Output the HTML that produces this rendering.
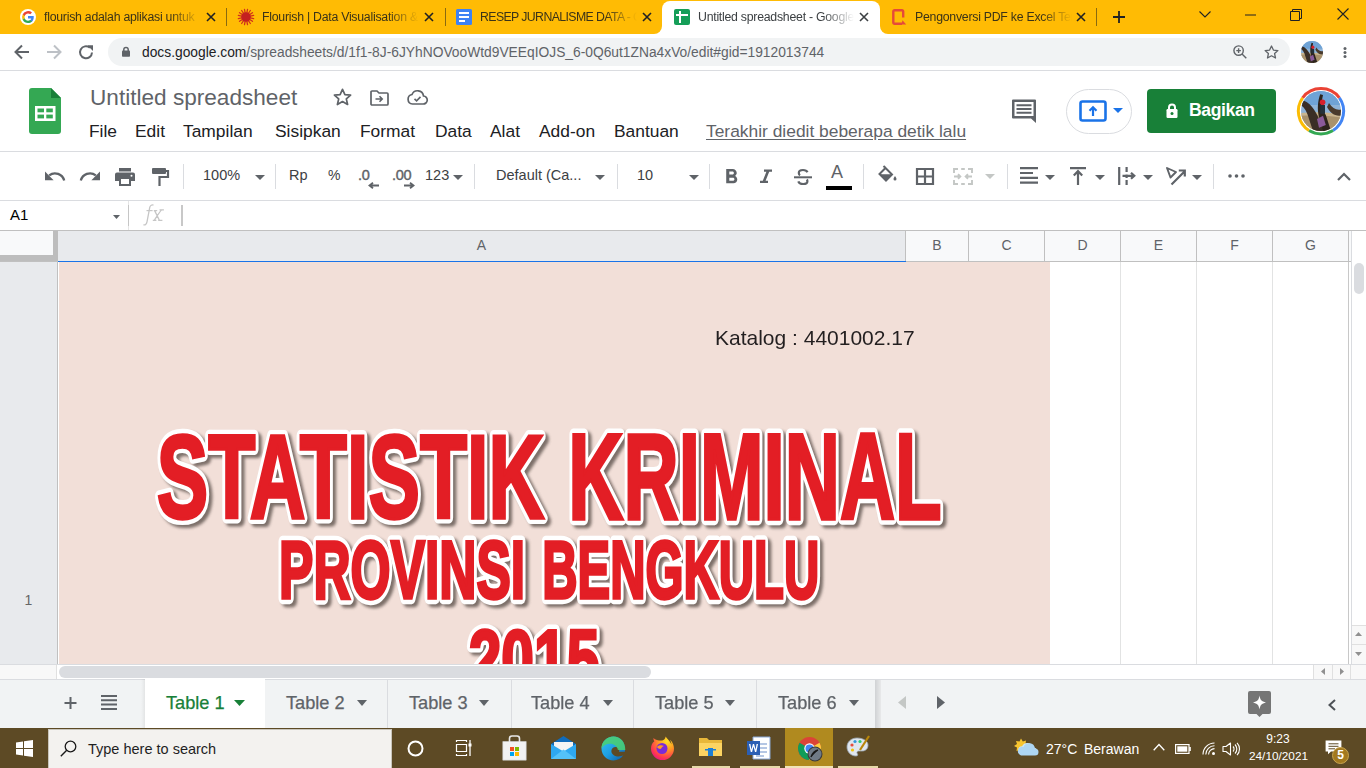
<!DOCTYPE html>
<html><head><meta charset="utf-8">
<style>
*{margin:0;padding:0;box-sizing:border-box}
html,body{width:1366px;height:768px;overflow:hidden;background:#fff;font-family:"Liberation Sans",sans-serif;position:relative}
.a{position:absolute}
.t{position:absolute;white-space:nowrap}
svg{position:absolute;overflow:visible}
.tabt{font-size:12.3px;letter-spacing:-0.25px;color:#3b3318;height:16px;overflow:hidden;-webkit-mask-image:linear-gradient(to right,#000 80%,transparent 100%);mask-image:linear-gradient(to right,#000 80%,transparent 100%)}
.tabt.act{color:#3c4043}
.sep{top:164px;width:1px;height:25px;background:#dadce0}
.tbt{top:167px;font-size:14.5px;color:#3c4043}
svg.tri{top:175px;width:10px;height:5px}
.vl{width:1px;background:#c0c0c0}
.colh{top:237px;text-align:center;font-size:14px;color:#5f6368}
.stab{top:693px;font-size:18.2px;color:#5f6368;-webkit-text-stroke:0.25px currentColor}
.menu{top:121px;font-size:17.4px;color:#202124}
</style></head><body>

<!-- TAB STRIP -->

<div class="a" style="left:0;top:0;width:1366px;height:34px;background:#ffbb04"></div>
<!-- active tab -->
<div class="a" style="left:654px;top:24px;width:234px;height:10px;background:#fff"></div>
<div class="a" style="left:644px;top:18px;width:18px;height:16px;background:#ffbb04;border-bottom-right-radius:8px"></div>
<div class="a" style="left:880px;top:18px;width:18px;height:16px;background:#ffbb04;border-bottom-left-radius:8px"></div>
<div class="a" style="left:662px;top:1px;width:218px;height:33px;background:#fff;border-radius:8px 8px 0 0"></div>
<!-- separators -->
<div class="a" style="left:226px;top:8px;width:1px;height:18px;background:#8a6a10"></div>
<div class="a" style="left:445px;top:8px;width:1px;height:18px;background:#8a6a10"></div>
<div class="a" style="left:1096px;top:8px;width:1px;height:18px;background:#8a6a10"></div>
<!-- tab titles -->
<div class="t tabt" style="left:44px;top:10px;width:157px;">flourish adalah aplikasi untuk</div>
<div class="t tabt" style="left:262px;top:10px;width:157px;">Flourish | Data Visualisation &amp; Storytelling</div>
<div class="t tabt" style="left:480px;top:10px;width:157px;letter-spacing:-0.6px">RESEP JURNALISME DATA - Google Dokumen</div>
<div class="t tabt act" style="left:698px;top:10px;width:156px;">Untitled spreadsheet - Google Spreadsheet</div>
<div class="t tabt" style="left:915px;top:10px;width:157px;">Pengonversi PDF ke Excel Terbaik</div>
<!-- close X -->
<svg style="left:206px;top:12px" width="10" height="10" viewBox="0 0 10 10"><path d="M1 1L9 9M9 1L1 9" stroke="#202124" stroke-width="1.6"/></svg>
<svg style="left:424px;top:12px" width="10" height="10" viewBox="0 0 10 10"><path d="M1 1L9 9M9 1L1 9" stroke="#202124" stroke-width="1.6"/></svg>
<svg style="left:642px;top:12px" width="10" height="10" viewBox="0 0 10 10"><path d="M1 1L9 9M9 1L1 9" stroke="#202124" stroke-width="1.6"/></svg>
<svg style="left:859px;top:12px" width="10" height="10" viewBox="0 0 10 10"><path d="M1 1L9 9M9 1L1 9" stroke="#3c4043" stroke-width="1.6"/></svg>
<svg style="left:1076px;top:12px" width="10" height="10" viewBox="0 0 10 10"><path d="M1 1L9 9M9 1L1 9" stroke="#202124" stroke-width="1.6"/></svg>
<!-- favicons -->
<svg style="left:20px;top:9px" width="16" height="16" viewBox="0 0 16 16"><circle cx="8" cy="8" r="8" fill="#fff"/>
<g transform="translate(8 8) scale(1.25) translate(-8 -8)">
<path d="M12.6 8.2c0-.4 0-.7-.1-1H8v1.9h2.6a2.2 2.2 0 0 1-1 1.5v1.2h1.6c.9-.9 1.4-2.1 1.4-3.6z" fill="#4285f4"/>
<path d="M8 12.8c1.3 0 2.4-.4 3.2-1.2l-1.6-1.2c-.4.3-1 .5-1.6.5-1.2 0-2.3-.8-2.6-2H3.8v1.3A4.8 4.8 0 0 0 8 12.8z" fill="#34a853"/>
<path d="M5.4 8.9a2.9 2.9 0 0 1 0-1.8V5.8H3.8a4.8 4.8 0 0 0 0 4.4z" fill="#fbbc05"/>
<path d="M8 5.1c.7 0 1.3.2 1.8.7l1.4-1.4A4.8 4.8 0 0 0 3.8 5.8l1.6 1.3c.4-1.2 1.4-2 2.6-2z" fill="#ea4335"/></g></svg>
<svg style="left:238px;top:9px" width="16" height="16" viewBox="0 0 16 16"><g stroke="#d0301c" stroke-width="1.3" stroke-linecap="round"><path d="M12.41 8.88L15.65 9.52"/><path d="M11.74 10.50L14.49 12.33"/><path d="M10.50 11.74L12.33 14.49"/><path d="M8.88 12.41L9.52 15.65"/><path d="M7.12 12.41L6.48 15.65"/><path d="M5.50 11.74L3.67 14.49"/><path d="M4.26 10.50L1.51 12.33"/><path d="M3.59 8.88L0.35 9.52"/><path d="M3.59 7.12L0.35 6.48"/><path d="M4.26 5.50L1.51 3.67"/><path d="M5.50 4.26L3.67 1.51"/><path d="M7.12 3.59L6.48 0.35"/><path d="M8.88 3.59L9.52 0.35"/><path d="M10.50 4.26L12.33 1.51"/><path d="M11.74 5.50L14.49 3.67"/><path d="M12.41 7.12L15.65 6.48"/></g><circle cx="8" cy="8" r="4.8" fill="#c42020"/></svg>
<svg style="left:456px;top:9px" width="16" height="16" viewBox="0 0 16 16"><rect x="0" y="0" width="16" height="16" rx="1.5" fill="#3d82f4"/><path d="M3 4H13M3 8H13M3 12H9" stroke="#fff" stroke-width="2"/></svg>
<svg style="left:674px;top:9px" width="16" height="16" viewBox="0 0 16 16"><rect x="0" y="0" width="16" height="16" rx="2" fill="#159e58"/><path d="M2 6H14M6 2V14" stroke="#fff" stroke-width="2"/></svg>
<svg style="left:891px;top:9px" width="16" height="16" viewBox="0 0 16 16"><path d="M12.2 8.5V2.5a1.2 1.2 0 0 0-1.2-1.2H3.5a1.2 1.2 0 0 0-1.2 1.2v11a1.2 1.2 0 0 0 1.2 1.2H11" fill="none" stroke="#e5493a" stroke-width="2.4"/><path d="M11.5 11.2L15.2 15.6H10.5z" fill="#e5493a"/></svg>
<!-- new tab, window controls -->
<svg style="left:1113px;top:11px" width="12" height="12" viewBox="0 0 12 12"><path d="M6 0V12M0 6H12" stroke="#202124" stroke-width="1.8"/></svg>
<svg style="left:1199px;top:11px" width="12" height="7" viewBox="0 0 12 7"><path d="M0.5 0.5L6 6L11.5 0.5" fill="none" stroke="#202124" stroke-width="1.1"/></svg>
<svg style="left:1245px;top:14px" width="11" height="2" viewBox="0 0 11 2"><path d="M0 1H11" stroke="#202124" stroke-width="1"/></svg>
<svg style="left:1290px;top:9px" width="12" height="12" viewBox="0 0 12 12"><path d="M0.5 2.5h9v9h-9z M2.5 2.5V0.5h9v9h-2" fill="none" stroke="#202124" stroke-width="1"/></svg>
<svg style="left:1337px;top:8px" width="12" height="12" viewBox="0 0 12 12"><path d="M0.5 0.5L11.5 11.5M11.5 0.5L0.5 11.5" stroke="#202124" stroke-width="1.1"/></svg>


<!-- OMNIBOX ROW -->
<div class="a" style="left:0;top:34px;width:1366px;height:37px;background:#fff;border-bottom:1px solid #dadce0"></div>
<div class="a" style="left:108px;top:38px;width:1182px;height:28px;border-radius:14px;background:#f1f3f4"></div>
<svg style="left:14px;top:44px" width="16" height="16" viewBox="0 0 16 16"><path d="M15 8H2.2M8 1.5L1.5 8L8 14.5" fill="none" stroke="#5f6368" stroke-width="2"/></svg>
<svg style="left:46px;top:44px" width="16" height="16" viewBox="0 0 16 16"><path d="M1 8H13.8M8 1.5L14.5 8L8 14.5" fill="none" stroke="#bdc1c6" stroke-width="2"/></svg>
<svg style="left:78px;top:44px" width="16" height="16" viewBox="0 0 16 16"><path d="M14 8.5A6 6 0 1 1 11.9 3.7" fill="none" stroke="#5f6368" stroke-width="2"/><path d="M9.3 1.2H15V6.9Z" fill="#5f6368"/></svg>
<svg style="left:122px;top:46px" width="8" height="11" viewBox="0 0 8 11"><path d="M1.8 5V3.6a2.2 2.2 0 0 1 4.4 0V5" fill="none" stroke="#5f6368" stroke-width="1.5"/><rect x="0" y="4.6" width="8" height="6.2" rx="0.8" fill="#5f6368"/></svg>
<div class="t" id="url" style="left:142px;top:45px;font-size:13.8px;color:#5f6368"><span style="color:#202124">docs.google.com</span>/spreadsheets/d/1f1-8J-6JYhNOVooWtd9VEEqIOJS_6-0Q6ut1ZNa4xVo/edit#gid=1912013744</div>
<svg style="left:1233px;top:45px" width="14" height="14" viewBox="0 0 14 14"><circle cx="5.6" cy="5.6" r="4.7" fill="none" stroke="#5f6368" stroke-width="1.4"/><path d="M9 9L13.3 13.3M3.3 5.6H7.9M5.6 3.3V7.9" stroke="#5f6368" stroke-width="1.4"/></svg>
<svg style="left:1264px;top:45px" width="15" height="14" viewBox="0 0 15 14"><path d="M7.5 1L9.4 5.1L13.9 5.6L10.6 8.6L11.5 13L7.5 10.8L3.5 13L4.4 8.6L1.1 5.6L5.6 5.1Z" fill="none" stroke="#5f6368" stroke-width="1.3" stroke-linejoin="round"/></svg>
<svg style="left:1301px;top:41px" width="22" height="22" viewBox="0 0 100 100"><clipPath id="av1"><circle cx="50" cy="50" r="50"/></clipPath><g clip-path="url(#av1)"><rect width="100" height="100" fill="#8fb4d8"/><rect y="0" width="100" height="35" fill="#6fa3d6"/><path d="M0 55Q50 50 100 58V100H0z" fill="#c9b48e"/><path d="M0 62Q40 58 100 66V100H0z" fill="#a8916c"/><path d="M-5 20C20 25 35 45 45 70L60 100H30L20 70C15 50 5 35 -5 35z" fill="#3a2e26"/><path d="M55 10C50 30 52 45 62 60L75 100H55L45 65C40 45 42 25 48 8z" fill="#2d241d"/><path d="M70 30C80 45 90 50 105 45V60C88 65 75 58 65 40z" fill="#4a3a2c"/><path d="M48 35h12v22H48z" fill="#24303a"/><circle cx="54" cy="28" r="7" fill="#d8202c"/><path d="M40 70L55 62L62 85L45 92z" fill="#8a5a9a"/></g></svg>
<svg style="left:1343px;top:47px" width="4" height="11" viewBox="0 0 4 11"><circle cx="2" cy="1.5" r="1.5" fill="#5f6368"/><circle cx="2" cy="5.5" r="1.5" fill="#5f6368"/><circle cx="2" cy="9.5" r="1.5" fill="#5f6368"/></svg>


<!-- DOCS HEADER -->
<div class="a" style="left:0;top:71px;width:1366px;height:81px;background:#fff;border-bottom:1px solid #dadce0"></div>
<svg style="left:29px;top:88px" width="32" height="46" viewBox="0 0 32 46"><path d="M3 0H22L32 10V43a3 3 0 0 1-3 3H3a3 3 0 0 1-3-3V3a3 3 0 0 1 3-3z" fill="#34a853"/><path d="M22 0L32 10H22z" fill="#188038"/><rect x="6" y="18" width="20.5" height="15" fill="#fff"/><rect x="8.5" y="20.5" width="6.5" height="3.8" fill="#34a853"/><rect x="17.3" y="20.5" width="6.5" height="3.8" fill="#34a853"/><rect x="8.5" y="26.6" width="6.5" height="3.8" fill="#34a853"/><rect x="17.3" y="26.6" width="6.5" height="3.8" fill="#34a853"/></svg>
<div class="t" id="title" style="left:90px;top:85px;font-size:22.6px;color:#5f6368">Untitled spreadsheet</div>
<svg style="left:333px;top:88px" width="19" height="18" viewBox="0 0 19 18"><path d="M9.5 1.3L11.9 6.6L17.6 7.1L13.3 10.9L14.6 16.5L9.5 13.5L4.4 16.5L5.7 10.9L1.4 7.1L7.1 6.6Z" fill="none" stroke="#5f6368" stroke-width="1.7" stroke-linejoin="round"/></svg>
<svg style="left:370px;top:90px" width="19" height="16" viewBox="0 0 19 16"><path d="M1 2a1 1 0 0 1 1-1h5l2 2h8a1 1 0 0 1 1 1v10a1 1 0 0 1-1 1H2a1 1 0 0 1-1-1z" fill="none" stroke="#5f6368" stroke-width="1.7"/><path d="M5.5 9H12M9.5 6.3L12.2 9L9.5 11.7" fill="none" stroke="#5f6368" stroke-width="1.6"/></svg>
<svg style="left:407px;top:90px" width="21" height="15" viewBox="0 0 21 15"><path d="M5.5 14H16a4 4 0 0 0 .5-8A6 6 0 0 0 5 4.5 4.8 4.8 0 0 0 5.5 14z" fill="none" stroke="#5f6368" stroke-width="1.7"/><path d="M7.5 8.8L9.6 10.8L13.5 6.9" fill="none" stroke="#5f6368" stroke-width="1.6"/></svg>
<div class="t menu" style="left:89px">File</div>
<div class="t menu" style="left:135px">Edit</div>
<div class="t menu" style="left:183px">Tampilan</div>
<div class="t menu" style="left:275px">Sisipkan</div>
<div class="t menu" style="left:360px">Format</div>
<div class="t menu" style="left:435px">Data</div>
<div class="t menu" style="left:490px">Alat</div>
<div class="t menu" style="left:539px">Add-on</div>
<div class="t menu" style="left:614px">Bantuan</div>
<div class="t menu" id="lastedit" style="left:706px;color:#5f6368;text-decoration:underline;text-underline-offset:2px">Terakhir diedit beberapa detik lalu</div>
<svg style="left:1011px;top:98px" width="26" height="25" viewBox="0 0 26 25"><path d="M2 1.5h22a1 1 0 0 1 1 1V25l-5-4.5H2a1 1 0 0 1-1-1v-17a1 1 0 0 1 1-1z" fill="#5f6368"/><rect x="3.5" y="4" width="19" height="14" fill="#fff"/><path d="M5.5 7.2h15M5.5 11h15M5.5 14.8h15" stroke="#5f6368" stroke-width="2"/></svg>
<div class="a" style="left:1066px;top:89px;width:66px;height:45px;border:1px solid #dadce0;border-radius:22.5px;background:#fff"></div>
<svg style="left:1079px;top:100px" width="28" height="22" viewBox="0 0 28 22"><rect x="1.5" y="1.5" width="25" height="19" rx="2" fill="none" stroke="#1a73e8" stroke-width="2.6"/><path d="M14 16V8M10.5 10.8L14 7.3L17.5 10.8" fill="none" stroke="#1a73e8" stroke-width="2.2"/></svg>
<svg style="left:1113px;top:108px" width="10" height="5" viewBox="0 0 10 5"><path d="M0 0H10L5 5z" fill="#1a73e8"/></svg>
<div class="a" style="left:1147px;top:89px;width:129px;height:44px;border-radius:4px;background:#188038"></div>
<svg style="left:1166px;top:103px" width="12" height="15" viewBox="0 0 12 15"><path d="M3 6.5V4.5a3 3 0 0 1 6 0V6.5" fill="none" stroke="#fff" stroke-width="2"/><rect x="0.5" y="6" width="11" height="9" rx="1.2" fill="#fff"/><circle cx="6" cy="10.5" r="1.5" fill="#188038"/></svg>
<div class="t" id="bagikan" style="left:1189px;top:100px;font-size:17.6px;letter-spacing:-0.4px;font-weight:bold;color:#fff">Bagikan</div>
<svg style="left:1296px;top:86px" width="50" height="50" viewBox="0 0 50 50"><g fill="none" stroke-width="3"><path d="M6.6 11.8A23 23 0 0 1 43.4 11.8" stroke="#ea4335"/><path d="M43.4 11.8A23 23 0 0 1 37 44.5" stroke="#4285f4"/><path d="M37 44.5A23 23 0 0 1 13 44.5" stroke="#34a853"/><path d="M13 44.5A23 23 0 0 1 6.6 11.8" stroke="#fbbc04"/></g></svg>
<svg style="left:1301px;top:91px" width="40" height="40" viewBox="0 0 100 100"><clipPath id="av2"><circle cx="50" cy="50" r="50"/></clipPath><g clip-path="url(#av2)"><rect width="100" height="100" fill="#8fb4d8"/><rect y="0" width="100" height="35" fill="#6fa3d6"/><path d="M0 55Q50 50 100 58V100H0z" fill="#c9b48e"/><path d="M0 62Q40 58 100 66V100H0z" fill="#a8916c"/><path d="M-5 20C20 25 35 45 45 70L60 100H30L20 70C15 50 5 35 -5 35z" fill="#3a2e26"/><path d="M55 10C50 30 52 45 62 60L75 100H55L45 65C40 45 42 25 48 8z" fill="#2d241d"/><path d="M70 30C80 45 90 50 105 45V60C88 65 75 58 65 40z" fill="#4a3a2c"/><path d="M48 35h12v22H48z" fill="#24303a"/><circle cx="54" cy="28" r="7" fill="#d8202c"/><path d="M40 70L55 62L62 85L45 92z" fill="#8a5a9a"/></g></svg>


<!-- TOOLBAR -->
<div class="a" style="left:0;top:152px;width:1366px;height:49px;background:#fff;border-bottom:1px solid #dadce0"></div>
<!-- undo/redo -->
<svg style="left:45px;top:171px" width="20" height="10" viewBox="0 0 20 10"><path d="M4.2 4.3A9.5 9.5 0 0 1 19.2 9.6" fill="none" stroke="#5f6368" stroke-width="2.3"/><path d="M0 0.5V9.3H8.6z" fill="#5f6368"/></svg>
<svg style="left:80px;top:171px" width="20" height="10" viewBox="0 0 20 10"><path d="M15.8 4.3A9.5 9.5 0 0 0 0.8 9.6" fill="none" stroke="#5f6368" stroke-width="2.3"/><path d="M20 0.5V9.3H11.4z" fill="#5f6368"/></svg>
<!-- print -->
<svg style="left:115px;top:168px" width="20" height="18" viewBox="0 0 20 18"><rect x="4" y="0" width="12" height="3.5" fill="#5f6368"/><path d="M2 4.5h16a2 2 0 0 1 2 2V13h-4v5H4v-5H0V6.5a2 2 0 0 1 2-2z" fill="#5f6368"/><rect x="6" y="11" width="8" height="5" fill="#fff"/><circle cx="16.5" cy="7.8" r="1" fill="#fff"/></svg>
<!-- paint format -->
<svg style="left:152px;top:168px" width="17" height="18" viewBox="0 0 17 18"><rect x="0" y="0" width="14" height="6" rx="1" fill="#5f6368"/><path d="M14 3H16V9H7.5V18" fill="none" stroke="#5f6368" stroke-width="2.2"/></svg>
<div class="a sep" style="left:183px"></div>
<div class="t tbt" style="left:203px">100%</div>
<svg class="tri" style="left:255px" viewBox="0 0 10 5"><path d="M0 0H10L5 5z" fill="#5f6368"/></svg>
<div class="a sep" style="left:275px"></div>
<div class="t tbt" style="left:289px">Rp</div>
<div class="t tbt" style="left:328px;font-size:14px;top:167px">%</div>
<div class="t tbt" style="left:358px;letter-spacing:-0.3px;color:#5f6368;-webkit-text-stroke:0.4px #5f6368">.0</div>
<svg style="left:368px;top:182px" width="11" height="7" viewBox="0 0 11 7"><path d="M11 3.5H2.5M5 0.8L1.5 3.5L5 6.2" fill="none" stroke="#5f6368" stroke-width="1.8"/></svg>
<div class="t tbt" style="left:392px;letter-spacing:-0.3px;color:#5f6368;-webkit-text-stroke:0.4px #5f6368">.00</div>
<svg style="left:404px;top:182px" width="11" height="7" viewBox="0 0 11 7"><path d="M0 3.5H8.5M6 0.8L9.5 3.5L6 6.2" fill="none" stroke="#5f6368" stroke-width="1.8"/></svg>
<div class="t tbt" style="left:425px">123</div>
<svg class="tri" style="left:453px" viewBox="0 0 10 5"><path d="M0 0H10L5 5z" fill="#5f6368"/></svg>
<div class="a sep" style="left:474px"></div>
<div class="t tbt" style="left:496px">Default (Ca...</div>
<svg class="tri" style="left:595px" viewBox="0 0 10 5"><path d="M0 0H10L5 5z" fill="#5f6368"/></svg>
<div class="a sep" style="left:617px"></div>
<div class="t tbt" style="left:637px">10</div>
<svg class="tri" style="left:689px" viewBox="0 0 10 5"><path d="M0 0H10L5 5z" fill="#5f6368"/></svg>
<div class="a sep" style="left:709px"></div>
<svg style="left:719px;top:165px" width="24" height="24" viewBox="0 0 24 24"><g transform="translate(0 -0.2) scale(1.03)"><path d="M15.6 10.79c.97-.67 1.65-1.77 1.65-2.79 0-2.26-1.75-4-4-4H7v14h7.04c2.09 0 3.71-1.7 3.71-3.79 0-1.52-.86-2.82-2.15-3.42zM10 6.5h3c.83 0 1.5.67 1.5 1.5s-.67 1.5-1.5 1.5h-3v-3zm3.5 9H10v-3h3.5c.83 0 1.5.67 1.5 1.5s-.67 1.5-1.5 1.5z" fill="#5f6368"/></g></svg>
<svg style="left:754px;top:165px" width="24" height="24" viewBox="0 0 24 24"><path d="M10 4.5v2.3h2.4l-3.6 9H6v2.3h8v-2.3h-2.4l3.6-9H18V4.5z" fill="#5f6368"/></svg>
<svg style="left:794px;top:169px" width="18" height="16" viewBox="0 0 18 16"><path d="M13.5 3.2C12.8 1.7 11.2 1 9 1 6.5 1 4.8 2.2 4.8 4c0 1 .5 1.8 1.2 2.3M12.8 10.5c.4.5.6 1 .6 1.7 0 1.8-1.8 2.8-4.3 2.8-2.4 0-4.2-.9-4.8-2.7" fill="none" stroke="#5f6368" stroke-width="2.2"/><path d="M0 8.3H18" stroke="#5f6368" stroke-width="2"/></svg>
<div class="t" style="left:831px;top:162px;font-size:18px;color:#5f6368">A</div>
<div class="a" style="left:826px;top:186px;width:26px;height:4px;background:#000"></div>
<div class="a sep" style="left:863px"></div>
<svg style="left:878px;top:165px" width="19" height="17" viewBox="0 0 19 17"><path d="M5.5 1L7 2.5" stroke="#5f6368" stroke-width="2"/><path d="M7.5 3L14 9.5L8 15.5L1.5 9z" fill="none" stroke="#5f6368" stroke-width="2"/><path d="M1.5 9.2L14 9.2L8 15.5z" fill="#5f6368"/><path d="M17 11c.9 1.3 1.5 2.2 1.5 3a1.5 1.5 0 0 1-3 0c0-.8.6-1.7 1.5-3z" fill="#5f6368"/></svg>
<svg style="left:916px;top:168px" width="18" height="17" viewBox="0 0 18 17"><path d="M1 1h16v15H1zM9 1v15M1 8.5h16" fill="none" stroke="#5f6368" stroke-width="2.2"/></svg>
<svg style="left:953px;top:168px" width="20" height="17" viewBox="0 0 20 17"><path d="M1 5V1h4M15 1h4v4M1 12v4h4M15 16h4v-4M1 8.5h6M5 6.3L7.3 8.5L5 10.7M19 8.5h-6M15 6.3L12.7 8.5L15 10.7M8.2 1h3.6M8.2 16h3.6" fill="none" stroke="#c4c7c5" stroke-width="1.9"/></svg>
<svg style="left:985px;top:174px" width="10" height="5" viewBox="0 0 10 5"><path d="M0 0H10L5 5z" fill="#c4c7c5"/></svg>
<div class="a sep" style="left:1007px"></div>
<svg style="left:1020px;top:167px" width="18" height="17" viewBox="0 0 18 17"><path d="M0 1.2H18M0 6H13M0 10.8H18M0 15.6H18" stroke="#5f6368" stroke-width="2.2"/></svg>
<svg class="tri" style="left:1045px" viewBox="0 0 10 5"><path d="M0 0H10L5 5z" fill="#5f6368"/></svg>
<svg style="left:1070px;top:167px" width="16" height="18" viewBox="0 0 16 18"><path d="M0 1.2H16M8 18V5M3.8 8.6L8 4.2L12.2 8.6" fill="none" stroke="#5f6368" stroke-width="2.2"/></svg>
<svg class="tri" style="left:1095px" viewBox="0 0 10 5"><path d="M0 0H10L5 5z" fill="#5f6368"/></svg>
<svg style="left:1118px;top:167px" width="18" height="18" viewBox="0 0 18 18"><path d="M1.2 0V18M8.6 0V5M8.6 7.5V11M8.6 13V18M4.5 8.8H16M13 5.8L16.3 8.8L13 11.8" fill="none" stroke="#5f6368" stroke-width="2.2"/></svg>
<svg class="tri" style="left:1143px" viewBox="0 0 10 5"><path d="M0 0H10L5 5z" fill="#5f6368"/></svg>
<svg style="left:1166px;top:167px" width="20" height="18" viewBox="0 0 20 18"><path d="M1 1L10 5L4.5 10.5z" fill="none" stroke="#5f6368" stroke-width="1.9" stroke-linejoin="round"/><path d="M5.5 17.5L18.5 4.5M12.8 3.5H18.8V9.5" fill="none" stroke="#5f6368" stroke-width="2.2"/></svg>
<svg class="tri" style="left:1192px" viewBox="0 0 10 5"><path d="M0 0H10L5 5z" fill="#5f6368"/></svg>
<div class="a sep" style="left:1213px"></div>
<svg style="left:1228px;top:174px" width="17" height="4" viewBox="0 0 17 4"><circle cx="2" cy="2" r="1.8" fill="#5f6368"/><circle cx="8.5" cy="2" r="1.8" fill="#5f6368"/><circle cx="15" cy="2" r="1.8" fill="#5f6368"/></svg>
<svg style="left:1337px;top:172px" width="14" height="9" viewBox="0 0 14 9"><path d="M1 8L7 2L13 8" fill="none" stroke="#5f6368" stroke-width="2.2"/></svg>


<!-- FORMULA BAR -->
<div class="a" style="left:0;top:201px;width:1366px;height:30px;background:#fff;border-bottom:1px solid #c0c0c0"></div>
<div class="t" id="a1" style="left:10px;top:206px;font-size:15px;color:#000">A1</div>
<svg style="left:113px;top:215px" width="7" height="4" viewBox="0 0 7 4"><path d="M0 0H7L3.5 4z" fill="#5f6368"/></svg>
<div class="a" style="left:128px;top:201px;width:1px;height:29px;background:#e6e6e6"></div><div class="a" style="left:128px;top:205px;width:1px;height:21px;background:#c6c6c6"></div>
<svg style="left:143px;top:204px" width="23" height="22" viewBox="0 0 23 22"><path d="M10.5 1.2C9 .6 7.3 1.2 6.8 3.2L4 17.8C3.5 20.3 2 21.3.5 20.6" fill="none" stroke="#c6c6c6" stroke-width="1.3"/><path d="M3.5 6.6H9.6" stroke="#c6c6c6" stroke-width="1.2"/><path d="M11.5 6.4L16.5 16.5M18.8 5.6C16.5 8 14 12 11 16.6M9.8 16.4h3.6M15.2 16.4h4.2M10.8 6.6h3.4M16.5 5.8h4.4" fill="none" stroke="#c6c6c6" stroke-width="1.3"/></svg>
<div class="a" style="left:181px;top:205px;width:2px;height:21px;background:#c8c8c8"></div>


<!-- GRID -->
<!-- column headers -->
<div class="a" style="left:0;top:231px;width:1366px;height:31px;background:#f8f9fa;border-bottom:1px solid #c0c0c0"></div>
<div class="a" style="left:58px;top:231px;width:848px;height:30px;background:#e8eaed"></div>
<div class="a" style="left:58px;top:261px;width:848px;height:1px;background:#1a73e8"></div>
<div class="a" style="left:0;top:231px;width:53px;height:24px;background:#f8f9fa"></div>
<div class="a" style="left:53px;top:231px;width:5px;height:30px;background:#bdbdbd"></div>
<div class="a" style="left:0;top:255px;width:58px;height:6px;background:#bdbdbd"></div>
<div class="a vl" style="left:905px;top:231px;height:30px"></div>
<div class="a vl" style="left:968px;top:231px;height:30px"></div>
<div class="a vl" style="left:1044px;top:231px;height:30px"></div>
<div class="a vl" style="left:1120px;top:231px;height:30px"></div>
<div class="a vl" style="left:1196px;top:231px;height:30px"></div>
<div class="a vl" style="left:1272px;top:231px;height:30px"></div>
<div class="a vl" style="left:1348px;top:231px;height:30px"></div>
<div class="t colh" style="left:58px;width:847px">A</div>
<div class="t colh" style="left:906px;width:62px">B</div>
<div class="t colh" style="left:969px;width:75px">C</div>
<div class="t colh" style="left:1045px;width:75px">D</div>
<div class="t colh" style="left:1121px;width:75px">E</div>
<div class="t colh" style="left:1197px;width:75px">F</div>
<div class="t colh" style="left:1273px;width:75px">G</div>
<!-- row header + cells -->
<div class="a" style="left:0;top:262px;width:58px;height:402px;background:#e8eaed;border-right:1px solid #c0c0c0"></div>
<div class="t" style="left:0;top:592px;width:57px;text-align:center;font-size:14px;color:#666">1</div>
<div class="a" style="left:1120px;top:262px;width:1px;height:402px;background:#e2e3e3"></div>
<div class="a" style="left:1196px;top:262px;width:1px;height:402px;background:#e2e3e3"></div>
<div class="a" style="left:1272px;top:262px;width:1px;height:402px;background:#e2e3e3"></div>
<div class="a" style="left:1348px;top:262px;width:1px;height:402px;background:#c8c8c8"></div>
<!-- vertical scrollbar -->
<div class="a" style="left:1351px;top:231px;width:15px;height:433px;background:#fff;border-left:1px solid #dadce0"></div>
<div class="a" style="left:1354px;top:263px;width:10px;height:31px;border-radius:5px;background:#dadce0"></div>
<div class="a" style="left:1352px;top:625px;width:14px;height:20px;background:#f8f8f8;border-top:1px solid #e0e0e0;border-bottom:1px solid #e0e0e0"></div>
<div class="a" style="left:1352px;top:645px;width:14px;height:19px;background:#f8f8f8"></div>
<svg style="left:1355px;top:632px" width="7" height="4" viewBox="0 0 7 4"><path d="M0 4H7L3.5 0z" fill="#909090"/></svg>
<svg style="left:1355px;top:652px" width="7" height="4" viewBox="0 0 7 4"><path d="M0 0H7L3.5 4z" fill="#909090"/></svg>
<!-- horizontal scrollbar -->
<div class="a" style="left:0;top:664px;width:1366px;height:15px;background:#fff;border-top:1px solid #dadce0"></div>
<div class="a" style="left:0;top:665px;width:57px;height:14px;background:#f8f8f8;border-right:1px solid #e0e0e0"></div>
<div class="a" style="left:59px;top:666px;width:592px;height:12px;border-radius:6px;background:#dadce0"></div>
<div class="a" style="left:1313px;top:665px;width:20px;height:14px;background:#f8f8f8;border-left:1px solid #e0e0e0;border-right:1px solid #e0e0e0"></div>
<div class="a" style="left:1333px;top:665px;width:18px;height:14px;background:#f8f8f8;border-right:1px solid #e0e0e0"></div>
<div class="a" style="left:1351px;top:665px;width:15px;height:14px;background:#f8f8f8"></div>
<svg style="left:1321px;top:668px" width="4" height="7" viewBox="0 0 4 7"><path d="M4 0V7L0 3.5z" fill="#909090"/></svg>
<svg style="left:1340px;top:668px" width="4" height="7" viewBox="0 0 4 7"><path d="M0 0V7L4 3.5z" fill="#909090"/></svg>

<div class="a" style="left:58px;top:262px;width:992px;height:402px;background:#f2dfd8;overflow:hidden">
<div class="a" style="left:0;top:0;width:1px;height:402px;background:#fff"></div>
<div class="t" id="katalog" style="left:657px;top:64px;font-size:21px;color:#231f20;filter:blur(0.25px)">Katalog : 4401002.17</div>
<svg style="left:0;top:0" width="992" height="402" viewBox="58 262 992 402">
<defs><filter id="sh" x="-10%" y="-10%" width="120%" height="130%"><feGaussianBlur stdDeviation="1.6"/></filter></defs>
<g font-family="Liberation Sans" font-weight="bold" font-size="100" letter-spacing="0.0" stroke-linejoin="round">
<g transform="translate(3.2 3.2)" filter="url(#sh)" fill="#5e524e" stroke="#5e524e" stroke-width="10.3" opacity="0.8">
<text vector-effect="non-scaling-stroke" transform="translate(156.78 518.2) scale(0.7724 1.1943)">STATISTIK</text>
<text vector-effect="non-scaling-stroke" transform="translate(568.35 518.8) scale(0.7639 1.2203)">KRIMINAL</text>
<text vector-effect="non-scaling-stroke" transform="translate(279.1 597.89) scale(0.5147 0.8184)">PROVINSI</text>
<text vector-effect="non-scaling-stroke" transform="translate(542.28 597.89) scale(0.4888 0.8184)">BENGKULU</text>
<text vector-effect="non-scaling-stroke" transform="translate(468.64 687.69) scale(0.5876 0.8298)">2015</text>
</g>
<g fill="#fff" stroke="#fff" stroke-width="10.3">
<text vector-effect="non-scaling-stroke" transform="translate(156.78 518.2) scale(0.7724 1.1943)">STATISTIK</text>
<text vector-effect="non-scaling-stroke" transform="translate(568.35 518.8) scale(0.7639 1.2203)">KRIMINAL</text>
<text vector-effect="non-scaling-stroke" transform="translate(279.1 597.89) scale(0.5147 0.8184)">PROVINSI</text>
<text vector-effect="non-scaling-stroke" transform="translate(542.28 597.89) scale(0.4888 0.8184)">BENGKULU</text>
<text vector-effect="non-scaling-stroke" transform="translate(468.64 687.69) scale(0.5876 0.8298)">2015</text>
</g>
<g fill="#e31e25" stroke="#e31e25" stroke-width="2.8" stroke-linejoin="miter">
<text vector-effect="non-scaling-stroke" transform="translate(156.78 518.2) scale(0.7724 1.1943)">STATISTIK</text>
<text vector-effect="non-scaling-stroke" transform="translate(568.35 518.8) scale(0.7639 1.2203)">KRIMINAL</text>
<text vector-effect="non-scaling-stroke" transform="translate(279.1 597.89) scale(0.5147 0.8184)">PROVINSI</text>
<text vector-effect="non-scaling-stroke" transform="translate(542.28 597.89) scale(0.4888 0.8184)">BENGKULU</text>
<text vector-effect="non-scaling-stroke" transform="translate(468.64 687.69) scale(0.5876 0.8298)">2015</text>
</g>
</g>
</svg>
</div>



<!-- SHEET TABS -->
<div class="a" style="left:0;top:679px;width:1366px;height:49px;background:#f1f3f4;border-top:1px solid #dadce0"></div>
<svg style="left:64px;top:697px" width="13" height="12" viewBox="0 0 13 12"><path d="M6.5 0V12M0.5 6H12.5" stroke="#5f6368" stroke-width="2"/></svg>
<svg style="left:101px;top:695px" width="16" height="15" viewBox="0 0 16 15"><path d="M0 1H16M0 5.3H16M0 9.6H16M0 13.9H16" stroke="#5f6368" stroke-width="2"/></svg>
<div class="a" style="left:141px;top:679px;width:4px;height:49px;background:linear-gradient(to right,rgba(0,0,0,0),rgba(0,0,0,0.06))"></div>
<div class="a" style="left:145px;top:679px;width:120px;height:49px;background:#fff"></div>
<div class="t stab" style="left:166px;color:#188038">Table 1</div>
<svg style="left:234px;top:700px" width="11" height="6" viewBox="0 0 11 6"><path d="M0 0H11L5.5 6z" fill="#188038"/></svg>
<div class="t stab" style="left:286px">Table 2</div>
<svg style="left:357px;top:700px" width="10" height="6" viewBox="0 0 10 6"><path d="M0 0H10L5 6z" fill="#5f6368"/></svg>
<div class="a" style="left:387px;top:680px;width:1px;height:48px;background:#dadce0"></div>
<div class="t stab" style="left:409px">Table 3</div>
<svg style="left:479px;top:700px" width="10" height="6" viewBox="0 0 10 6"><path d="M0 0H10L5 6z" fill="#5f6368"/></svg>
<div class="a" style="left:511px;top:680px;width:1px;height:48px;background:#dadce0"></div>
<div class="t stab" style="left:531px">Table 4</div>
<svg style="left:603px;top:700px" width="10" height="6" viewBox="0 0 10 6"><path d="M0 0H10L5 6z" fill="#5f6368"/></svg>
<div class="a" style="left:633px;top:680px;width:1px;height:48px;background:#dadce0"></div>
<div class="t stab" style="left:655px">Table 5</div>
<svg style="left:725px;top:700px" width="10" height="6" viewBox="0 0 10 6"><path d="M0 0H10L5 6z" fill="#5f6368"/></svg>
<div class="a" style="left:756px;top:680px;width:1px;height:48px;background:#dadce0"></div>
<div class="t stab" style="left:778px">Table 6</div>
<svg style="left:849px;top:700px" width="10" height="6" viewBox="0 0 10 6"><path d="M0 0H10L5 6z" fill="#5f6368"/></svg>
<div class="a" style="left:875px;top:680px;width:6px;height:48px;background:linear-gradient(to right,#d0d2d4,#e8e9ea)"></div>
<svg style="left:898px;top:696px" width="8" height="13" viewBox="0 0 8 13"><path d="M8 0V13L0 6.5z" fill="#c4c7c5"/></svg>
<svg style="left:937px;top:696px" width="8" height="13" viewBox="0 0 8 13"><path d="M0 0V13L8 6.5z" fill="#5f6368"/></svg>
<svg style="left:1248px;top:691px" width="23" height="26" viewBox="0 0 23 26"><path d="M2 0h19a2 2 0 0 1 2 2v19a2 2 0 0 1-2 2h-6.5L11.5 26L8.5 23H2a2 2 0 0 1-2-2V2a2 2 0 0 1 2-2z" fill="#757575"/><path d="M11.5 4.5C12.2 9 13.5 10.3 18 11.5 13.5 12.7 12.2 14 11.5 18.5 10.8 14 9.5 12.7 5 11.5 9.5 10.3 10.8 9 11.5 4.5z" fill="#fff"/></svg>
<svg style="left:1327px;top:699px" width="9" height="12" viewBox="0 0 9 12"><path d="M8 1L2.5 6L8 11" fill="none" stroke="#4d5156" stroke-width="2"/></svg>


<!-- TASKBAR -->
<div class="a" style="left:0;top:728px;width:1366px;height:40px;background:#5d4a25"></div>
<svg style="left:16px;top:740px" width="17" height="17" viewBox="0 0 17 17"><path d="M0 2.4L7 1.4V8H0zM8 1.2L17 0V8H8zM0 9H7V15.6L0 14.6zM8 9H17V17L8 15.8z" fill="#fff"/></svg>
<div class="a" style="left:48px;top:729px;width:344px;height:39px;background:#f3f2ef;border:1px solid #c9c5bc;border-bottom:none"></div>
<svg style="left:60px;top:740px" width="17" height="17" viewBox="0 0 17 17"><circle cx="10.5" cy="6.5" r="5.3" fill="none" stroke="#1a1a1a" stroke-width="1.3"/><path d="M6.7 10.3L0.8 16.2" stroke="#1a1a1a" stroke-width="1.4"/></svg>
<div class="t" id="search" style="left:88px;top:741px;font-size:14.5px;color:#1f1f1f">Type here to search</div>
<svg style="left:407px;top:740px" width="17" height="17" viewBox="0 0 17 17"><circle cx="8.5" cy="8.5" r="7" fill="none" stroke="#fff" stroke-width="2"/></svg>
<svg style="left:455px;top:739px" width="18" height="18" viewBox="0 0 18 18"><path d="M1 1.5H12M1 16.5H12M1.5 1V3M11.5 1V3M1.5 15V17M11.5 15V17" stroke="#fff" stroke-width="1.2"/><path d="M1.5 5.5H11.5V12.5H1.5z" fill="none" stroke="#fff" stroke-width="1.2"/><path d="M15 1V17" stroke="#fff" stroke-width="1.3"/><rect x="13.5" y="4.5" width="3" height="3" fill="#fff"/></svg>
<svg style="left:502px;top:735px" width="25" height="26" viewBox="0 0 25 26"><path d="M0.8 6.5H24.2V25.2H0.8z" fill="#f2f2f2" stroke="#d0d0d0" stroke-width="0.6"/><path d="M7.5 7V3.5Q7.5 1 10 1H15Q17.5 1 17.5 3.5V7" fill="none" stroke="#e8e8e8" stroke-width="1.6"/><path d="M8 12h4v4H8z" fill="#f25022"/><path d="M13 12h4v4h-4z" fill="#7fba00"/><path d="M8 17h4v4H8z" fill="#00a4ef"/><path d="M13 17h4v4h-4z" fill="#ffb900"/></svg>
<svg style="left:551px;top:736px" width="25" height="23" viewBox="0 0 25 23"><path d="M0 8L12.5 0L25 8V23H0z" fill="#0f6cbd"/><path d="M3 6H22V13L12.5 18L3 13z" fill="#f4f4f4"/><path d="M0 8L12.5 15.5L25 8V23H0z" fill="#2ea8f0"/><path d="M0 23L12.5 13.5L25 23z" fill="#54c2f8"/></svg>
<svg style="left:601px;top:736px" width="25" height="25" viewBox="0 0 25 25"><defs><linearGradient id="eg" x1="0" y1="0" x2="1" y2="1"><stop offset="0" stop-color="#35c1f1"/><stop offset="0.5" stop-color="#1fa0e3"/><stop offset="1" stop-color="#0c59a4"/></linearGradient></defs><path d="M12.5 0.5a12 12 0 0 0-12 12c0 6.6 5.4 12 12 12 4 0 7.6-2 9.8-5.2-2.6 1.4-7 1.7-9.8-.4-2.8-2.1-2.6-5.6-.5-7.2 1.5-1.1 4.2-.8 5.4.5.9 1 1.2 2.3.6 3.6h5.8c.2-.7.2-1.4.2-2.1C24.5 6.3 19.2.5 12.5.5z" fill="url(#eg)"/><path d="M12.5 .5C6 .5.5 5.6.5 12.5c2.7-5 9.2-6 13.1-3.4 1.7 1.1 2.7 2.7 3.3 4.9h7.4C24.5 6.3 19.2.5 12.5.5z" fill="#4bd06f" opacity="0.85"/></svg>
<svg style="left:650px;top:735px" width="24" height="25" viewBox="0 0 24 25"><defs><radialGradient id="fg" cx="0.7" cy="0.2" r="0.9"><stop offset="0" stop-color="#ffe226"/><stop offset="0.4" stop-color="#ff9a22"/><stop offset="0.8" stop-color="#ff3750"/><stop offset="1" stop-color="#e31587"/></radialGradient></defs><path d="M23 9c-.6-1.7-1.9-3.6-3-4.3.9 1.8 1.4 3.5 1.5 4.8C20 5.8 17.6 4.4 15.6 1.4 15.4 3.6 14 5 12.2 5.5 9 5.7 5.5 5 3.4 3c.1 1.5.2 2.4.9 3.2C2 8 1 10.5 1 13.5a11.5 11.5 0 0 0 23 0c0-1.6-.4-3.2-1-4.5z" fill="url(#fg)"/><circle cx="12" cy="13.5" r="5.5" fill="#7b2bd8"/><path d="M7 12c1.5-2 4.5-2.5 7-1-1 .3-2 .9-2.5 2-.5 1.2-2.5 1.5-4.5-1z" fill="#ff9a22"/></svg>
<svg style="left:699px;top:737px" width="23" height="20" viewBox="0 0 23 20"><path d="M0 1h8l2 2h13v16H0z" fill="#e8b73a"/><path d="M0 6h23v13H0z" fill="#fcd462"/><path d="M9 11h5v8H9z" fill="#1c7fd6"/><path d="M6 12h11v1.5H6z" fill="#1c7fd6"/></svg>
<svg style="left:747px;top:736px" width="24" height="24" viewBox="0 0 24 24"><path d="M6 1h17v22H6z" fill="#fff" stroke="#8aa7d6" stroke-width="1"/><path d="M9 8h11M9 12h11M9 16h11M9 20h8" stroke="#6d8fc9" stroke-width="1.2"/><path d="M0 5h13v14H0z" fill="#2b5fb4"/><path d="M2 8l1.8 8h1.3L6.5 10.5 8 16h1.3L11 8H9.6l-1 5.4L7.1 8H5.9L4.4 13.4 3.4 8z" fill="#fff"/></svg>
<div class="a" style="left:785px;top:728px;width:48px;height:40px;background:#b08a1f"></div>
<svg style="left:797px;top:736px" width="26" height="26" viewBox="0 0 26 26"><circle cx="12.5" cy="12.5" r="11.5" fill="#db4437"/><path d="M12.5 12.5L2.5 6.8A11.5 11.5 0 0 0 12.5 24z" fill="#0f9d58"/><path d="M12.5 12.5L12.5 24A11.5 11.5 0 0 0 22.5 6.8z" fill="#ffcd40"/><circle cx="12.5" cy="12.5" r="5.2" fill="#fff"/><circle cx="12.5" cy="12.5" r="4" fill="#4285f4"/><circle cx="18" cy="18" r="7.5" fill="#3a3a3a"/><circle cx="18" cy="18" r="6.5" fill="#6f7a86"/><path d="M14 21c1.5-4 3.5-6 7-7" stroke="#1a1a1a" stroke-width="1.5"/></svg>
<svg style="left:846px;top:735px" width="24" height="24" viewBox="0 0 24 24"><path d="M11 3C5 3 1 7 1 12c0 5 4 9 9 9 2 0 2-1.5 1.2-2.5-.8-1 0-2.5 1.5-2.5H16c4 0 6-2.5 6-6C22 6 17 3 11 3z" fill="#dfe6ee" stroke="#9aa8b6" stroke-width="0.8"/><circle cx="6" cy="10" r="1.6" fill="#e74c3c"/><circle cx="9" cy="6.5" r="1.6" fill="#3498db"/><circle cx="14" cy="6.5" r="1.6" fill="#2ecc71"/><circle cx="6.5" cy="15" r="1.6" fill="#f1c40f"/><path d="M14 15L23 1" stroke="#b8860b" stroke-width="2.2"/></svg>
<div class="a" style="left:692px;top:766px;width:38px;height:2px;background:#e6d9a9"></div>
<div class="a" style="left:740px;top:766px;width:40px;height:2px;background:#e6d9a9"></div>
<div class="a" style="left:785px;top:766px;width:48px;height:2px;background:#f0e4b8"></div>
<div class="a" style="left:838px;top:766px;width:40px;height:2px;background:#e6d9a9"></div>
<svg style="left:1014px;top:737px" width="25" height="19" viewBox="0 0 25 19"><path d="M7 1.5L8.8 4.5L12 3.5L11.5 7L14.5 8.5L11.5 10.5L12.5 13.5L9 13L7.5 16L5.8 13L2.5 14L3 10.5L0 9L3 7L2 4L5.5 4.5z" fill="#f7c531"/><path d="M7 17.5A4.2 4.2 0 0 1 8 9.3a6 6 0 0 1 11.2 1.2A3.6 3.6 0 0 1 20.5 17.5z" fill="#cfe7f7"/><path d="M7 18.5H21a3.5 3.5 0 0 0 0-7 6 6 0 0 0-11.5-1.5A4.2 4.2 0 0 0 7 18.5z" fill="#aed6f3"/></svg>
<div class="t" id="weather" style="left:1046px;top:741px;font-size:14px;color:#fff">27°C</div><div class="t" id="weather2" style="left:1084px;top:741px;font-size:14px;color:#fff">Berawan</div>
<svg style="left:1153px;top:743px" width="12" height="8" viewBox="0 0 12 8"><path d="M0.7 7.3L6 1.5L11.3 7.3" fill="none" stroke="#fff" stroke-width="1.3"/></svg>
<svg style="left:1175px;top:744px" width="16" height="10" viewBox="0 0 16 10"><rect x="0.6" y="0.6" width="13.4" height="8.8" fill="none" stroke="#fff" stroke-width="1.2"/><rect x="2.3" y="2.3" width="10" height="5.4" fill="#fff"/><rect x="14.2" y="3" width="1.6" height="4" fill="#fff"/></svg>
<svg style="left:1202px;top:742px" width="14" height="13" viewBox="0 0 14 13"><g fill="none" stroke="#fff" stroke-width="1.1"><path d="M1 12.5A11.5 11.5 0 0 1 12.5 1"/><path d="M3.8 12.5A8.7 8.7 0 0 1 12.5 3.8"/><path d="M6.6 12.5A5.9 5.9 0 0 1 12.5 6.6"/></g><circle cx="11.5" cy="11.5" r="1.5" fill="#fff"/></svg>
<svg style="left:1222px;top:742px" width="18" height="14" viewBox="0 0 18 14"><path d="M1 4.5H4L8.5 1V13L4 9.5H1z" fill="none" stroke="#fff" stroke-width="1.1" stroke-linejoin="round"/><path d="M11 4.5a3.5 3.5 0 0 1 0 5M13 2.5a6.5 6.5 0 0 1 0 9M15 0.8a9 9 0 0 1 0 12.4" fill="none" stroke="#fff" stroke-width="1.1"/></svg>
<div class="t" style="left:1249px;top:732px;width:58px;text-align:center;font-size:12px;color:#fff">9:23</div>
<div class="t" id="date" style="left:1249px;top:749px;font-size:11.8px;color:#fff">24/10/2021</div>
<svg style="left:1325px;top:740px" width="17" height="15" viewBox="0 0 17 15"><path d="M0.6 0.6H16.4V11.4H6L3 14.2V11.4H0.6z" fill="#fff"/><path d="M3.5 3.8H13.5M3.5 6.3H13.5M3.5 8.8H10" stroke="#5d4a25" stroke-width="1"/></svg>
<div class="a" style="left:1332px;top:747px;width:17px;height:17px;border-radius:50%;background:#a3791f;border:1px solid #c9a550"></div>
<div class="t" style="left:1332px;top:748px;width:17px;text-align:center;font-size:12px;font-weight:bold;color:#fff">5</div>


</body></html>
